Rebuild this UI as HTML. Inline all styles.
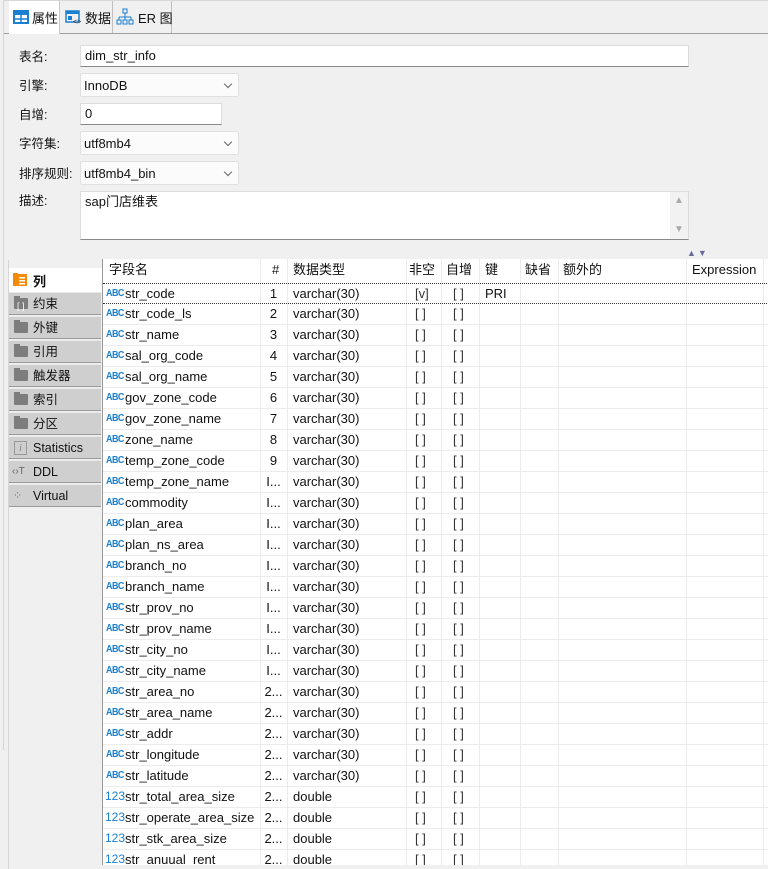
<!DOCTYPE html>
<html><head><meta charset="utf-8">
<style>
*{margin:0;padding:0;box-sizing:border-box}
body{width:768px;height:869px;overflow:hidden;background:#f0f0f0;font-family:"Liberation Sans","Noto Sans CJK SC",sans-serif;font-size:13px;color:#111;position:relative}
.a{position:absolute}
.lbl{position:absolute;left:19px;font-size:12.5px}
.inp{position:absolute;left:80px;background:#fff;border:1px solid #dcdcdc;border-bottom:1px solid #888;padding-left:4px;line-height:20px;font-size:13px}
.sel{position:absolute;left:80px;width:159px;height:24px;background:#fbfbfb;border:1px solid #e0e0e0;border-radius:2px;padding-left:3px;line-height:23px}
.sel:after{content:"";position:absolute;right:7px;top:7px;width:5px;height:5px;border-right:1px solid #666;border-bottom:1px solid #666;transform:rotate(45deg)}
.side{position:absolute;left:9px;width:92px;height:23px;background:#cfcfcf;border-top:1px solid #e8e8e8;border-bottom:1px solid #9a9a9a;padding-left:24px;line-height:22px;font-size:12.5px}
.fold{position:absolute;left:5px;top:5px;width:14px;height:11px;background:#7d7d7d;border-radius:1px}
.fold:before{content:"";position:absolute;left:0;top:-2px;width:6px;height:3px;background:#7d7d7d}
.tbl{position:absolute;left:102px;top:259px;width:666px;height:606px;background:#fff;border-left:1px solid #999;overflow:hidden}
.r{position:absolute;left:0;width:666px;height:21px;border-bottom:1px solid #ececec}
.r span{position:absolute;top:0;line-height:20px;white-space:nowrap}
.vl{position:absolute;top:0;width:1px;height:606px;background:#ececec}
.r span.ic{left:3px;top:5px;font-size:10px;font-weight:bold;color:#1a7fd0;letter-spacing:-0.6px;line-height:10px;transform:scaleX(0.9);transform-origin:left}
.r span.ic2{left:2px;top:1px;font-size:12px;color:#1a7fd0;line-height:16px}
.n{left:22px}.h{left:157px;width:27px;text-align:center}.t{left:190px}.nn{left:312px;color:#333}.ai{left:350px;color:#333}
</style></head><body>
<div class="a" style="left:3px;top:0;width:1px;height:750px;background:#d6d6d6"></div>
<div class="a" style="left:4px;top:0;width:764px;height:1px;background:#d8d8d8"></div>
<div class="a" style="left:4px;top:33px;width:764px;height:1px;background:#a0a0a0"></div>
<div class="a" style="left:9px;top:1px;width:51px;height:33px;background:#fff;border-right:1px solid #c8c8c8"></div>
<div class="a" style="left:112px;top:1px;width:1px;height:32px;background:#c0c0c0"></div>
<div class="a" style="left:171px;top:1px;width:1px;height:32px;background:#c0c0c0"></div>
<svg class="a" style="left:13px;top:10px" width="16" height="14"><rect x="1" y="1" width="14" height="12" fill="none" stroke="#1a7fd0" stroke-width="2"/><rect x="1" y="1" width="14" height="4" fill="#1a7fd0"/><line x1="8" y1="5" x2="8" y2="13" stroke="#1a7fd0" stroke-width="1.5"/><line x1="1" y1="9" x2="15" y2="9" stroke="#1a7fd0" stroke-width="1.5"/></svg>
<div class="a" style="left:32px;top:8px">属性</div>
<svg class="a" style="left:65px;top:10px" width="16" height="15"><rect x="1" y="1" width="13" height="11" fill="none" stroke="#1a7fd0" stroke-width="1.5"/><rect x="1" y="1" width="13" height="3" fill="#1a7fd0"/><rect x="3" y="6" width="4" height="4" fill="#1a7fd0"/><text x="8" y="14" font-size="7" fill="#333">&lt;&gt;</text></svg>
<div class="a" style="left:85px;top:8px">数据</div>
<svg class="a" style="left:116px;top:8px" width="18" height="18"><rect x="7" y="1" width="4" height="4" fill="none" stroke="#1a7fd0"/><path d="M9 5v4M3 9h12M3 9v3M9 9v3M15 9v3" stroke="#1a7fd0" fill="none"/><rect x="1" y="12" width="4" height="4" fill="none" stroke="#1a7fd0"/><rect x="7" y="12" width="4" height="4" fill="none" stroke="#1a7fd0"/><rect x="13" y="12" width="4" height="4" fill="none" stroke="#1a7fd0"/></svg>
<div class="a" style="left:138px;top:8px">ER 图</div>
<div class="lbl" style="top:46px">表名:</div>
<div class="inp" style="top:45px;width:609px;height:22px">dim_str_info</div>
<div class="lbl" style="top:75px">引擎:</div>
<div class="sel" style="top:73px">InnoDB</div>
<div class="lbl" style="top:104px">自增:</div>
<div class="inp" style="top:103px;width:142px;height:22px">0</div>
<div class="lbl" style="top:133px">字符集:</div>
<div class="sel" style="top:131px">utf8mb4</div>
<div class="lbl" style="top:163px">排序规则:</div>
<div class="sel" style="top:161px">utf8mb4_bin</div>
<div class="lbl" style="top:190px">描述:</div>
<div class="inp" style="top:191px;width:609px;height:49px;line-height:20px">sap门店维表</div>
<div class="a" style="left:670px;top:192px;width:18px;height:47px;background:#f2f2f2"></div>
<div class="a" style="left:674px;top:195px;font-size:10px;color:#aaa">▲</div>
<div class="a" style="left:674px;top:224px;font-size:10px;color:#aaa">▼</div>
<div class="a" style="left:687px;top:248px;font-size:9px;color:#6a6a9a;letter-spacing:2px">▲▼</div>
<div class="a" style="left:8px;top:260px;width:1px;height:609px;background:#d6d6d6"></div>
<div class="a" style="left:9px;top:268px;width:93px;height:24px;background:#fff"></div>
<svg class="a" style="left:13px;top:272px" width="14" height="14"><path d="M0 1h5v1h9v12H0z" fill="#f58a07"/><rect x="6" y="5" width="6" height="1.5" fill="#fff"/><rect x="6" y="8" width="6" height="1.5" fill="#fff"/><rect x="6" y="11" width="6" height="1.5" fill="#fff"/></svg>
<div class="a" style="left:33px;top:271px;font-weight:bold">列</div>
<div class="side" style="top:292px"><div class="fold"><span style="position:absolute;left:3px;top:-3px;color:#fff;font-size:9px">[ ]</span></div>约束</div>
<div class="side" style="top:316px"><div class="fold"></div>外键</div>
<div class="side" style="top:340px"><div class="fold"></div>引用</div>
<div class="side" style="top:364px"><div class="fold"></div>触发器</div>
<div class="side" style="top:388px"><div class="fold"></div>索引</div>
<div class="side" style="top:412px"><div class="fold"></div>分区</div>
<div class="side" style="top:436px"><div class="a" style="left:5px;top:4px;width:13px;height:14px;border:1px solid #999;font-style:italic;font-family:'Liberation Serif';font-size:11px;line-height:12px;text-align:center;color:#888">i</div>Statistics</div>
<div class="side" style="top:460px"><div class="a" style="left:3px;top:0;font-size:10px;color:#666">‹›T</div>DDL</div>
<div class="side" style="top:484px"><div class="a" style="left:4px;top:0;font-size:11px;color:#777">⁘</div>Virtual</div>
<div class="tbl">
<div class="r" style="top:0;height:23px;border-bottom:none"><span style="left:6px;top:1px">字段名</span><span style="left:169px;top:1px">#</span><span class="t" style="top:1px">数据类型</span><span style="left:306px;top:1px">非空</span><span style="left:343px;top:1px">自增</span><span style="left:382px;top:1px">键</span><span style="left:422px;top:1px">缺省</span><span style="left:460px;top:1px">额外的</span><span style="left:589px;top:1px">Expression</span></div>
<div class="vl" style="left:157px"></div><div class="vl" style="left:184px"></div><div class="vl" style="left:303px"></div><div class="vl" style="left:338px"></div><div class="vl" style="left:376px"></div><div class="vl" style="left:417px"></div><div class="vl" style="left:455px"></div><div class="vl" style="left:583px"></div><div class="vl" style="left:660px"></div>
<div class="r" style="top:24px;border-top:1px dotted #333;border-bottom:1px dotted #333"><span class="ic">ABC</span><span class="n">str_code</span><span class="h">1</span><span class="t">varchar(30)</span><span class="nn">[v]</span><span class="ai">[ ]</span><span style="left:382px">PRI</span></div>
<div class="r" style="top:45px"><span class="ic">ABC</span><span class="n">str_code_ls</span><span class="h">2</span><span class="t">varchar(30)</span><span class="nn">[ ]</span><span class="ai">[ ]</span></div>
<div class="r" style="top:66px"><span class="ic">ABC</span><span class="n">str_name</span><span class="h">3</span><span class="t">varchar(30)</span><span class="nn">[ ]</span><span class="ai">[ ]</span></div>
<div class="r" style="top:87px"><span class="ic">ABC</span><span class="n">sal_org_code</span><span class="h">4</span><span class="t">varchar(30)</span><span class="nn">[ ]</span><span class="ai">[ ]</span></div>
<div class="r" style="top:108px"><span class="ic">ABC</span><span class="n">sal_org_name</span><span class="h">5</span><span class="t">varchar(30)</span><span class="nn">[ ]</span><span class="ai">[ ]</span></div>
<div class="r" style="top:129px"><span class="ic">ABC</span><span class="n">gov_zone_code</span><span class="h">6</span><span class="t">varchar(30)</span><span class="nn">[ ]</span><span class="ai">[ ]</span></div>
<div class="r" style="top:150px"><span class="ic">ABC</span><span class="n">gov_zone_name</span><span class="h">7</span><span class="t">varchar(30)</span><span class="nn">[ ]</span><span class="ai">[ ]</span></div>
<div class="r" style="top:171px"><span class="ic">ABC</span><span class="n">zone_name</span><span class="h">8</span><span class="t">varchar(30)</span><span class="nn">[ ]</span><span class="ai">[ ]</span></div>
<div class="r" style="top:192px"><span class="ic">ABC</span><span class="n">temp_zone_code</span><span class="h">9</span><span class="t">varchar(30)</span><span class="nn">[ ]</span><span class="ai">[ ]</span></div>
<div class="r" style="top:213px"><span class="ic">ABC</span><span class="n">temp_zone_name</span><span class="h">I...</span><span class="t">varchar(30)</span><span class="nn">[ ]</span><span class="ai">[ ]</span></div>
<div class="r" style="top:234px"><span class="ic">ABC</span><span class="n">commodity</span><span class="h">I...</span><span class="t">varchar(30)</span><span class="nn">[ ]</span><span class="ai">[ ]</span></div>
<div class="r" style="top:255px"><span class="ic">ABC</span><span class="n">plan_area</span><span class="h">I...</span><span class="t">varchar(30)</span><span class="nn">[ ]</span><span class="ai">[ ]</span></div>
<div class="r" style="top:276px"><span class="ic">ABC</span><span class="n">plan_ns_area</span><span class="h">I...</span><span class="t">varchar(30)</span><span class="nn">[ ]</span><span class="ai">[ ]</span></div>
<div class="r" style="top:297px"><span class="ic">ABC</span><span class="n">branch_no</span><span class="h">I...</span><span class="t">varchar(30)</span><span class="nn">[ ]</span><span class="ai">[ ]</span></div>
<div class="r" style="top:318px"><span class="ic">ABC</span><span class="n">branch_name</span><span class="h">I...</span><span class="t">varchar(30)</span><span class="nn">[ ]</span><span class="ai">[ ]</span></div>
<div class="r" style="top:339px"><span class="ic">ABC</span><span class="n">str_prov_no</span><span class="h">I...</span><span class="t">varchar(30)</span><span class="nn">[ ]</span><span class="ai">[ ]</span></div>
<div class="r" style="top:360px"><span class="ic">ABC</span><span class="n">str_prov_name</span><span class="h">I...</span><span class="t">varchar(30)</span><span class="nn">[ ]</span><span class="ai">[ ]</span></div>
<div class="r" style="top:381px"><span class="ic">ABC</span><span class="n">str_city_no</span><span class="h">I...</span><span class="t">varchar(30)</span><span class="nn">[ ]</span><span class="ai">[ ]</span></div>
<div class="r" style="top:402px"><span class="ic">ABC</span><span class="n">str_city_name</span><span class="h">I...</span><span class="t">varchar(30)</span><span class="nn">[ ]</span><span class="ai">[ ]</span></div>
<div class="r" style="top:423px"><span class="ic">ABC</span><span class="n">str_area_no</span><span class="h">2...</span><span class="t">varchar(30)</span><span class="nn">[ ]</span><span class="ai">[ ]</span></div>
<div class="r" style="top:444px"><span class="ic">ABC</span><span class="n">str_area_name</span><span class="h">2...</span><span class="t">varchar(30)</span><span class="nn">[ ]</span><span class="ai">[ ]</span></div>
<div class="r" style="top:465px"><span class="ic">ABC</span><span class="n">str_addr</span><span class="h">2...</span><span class="t">varchar(30)</span><span class="nn">[ ]</span><span class="ai">[ ]</span></div>
<div class="r" style="top:486px"><span class="ic">ABC</span><span class="n">str_longitude</span><span class="h">2...</span><span class="t">varchar(30)</span><span class="nn">[ ]</span><span class="ai">[ ]</span></div>
<div class="r" style="top:507px"><span class="ic">ABC</span><span class="n">str_latitude</span><span class="h">2...</span><span class="t">varchar(30)</span><span class="nn">[ ]</span><span class="ai">[ ]</span></div>
<div class="r" style="top:528px"><span class="ic2">123</span><span class="n">str_total_area_size</span><span class="h">2...</span><span class="t">double</span><span class="nn">[ ]</span><span class="ai">[ ]</span></div>
<div class="r" style="top:549px"><span class="ic2">123</span><span class="n">str_operate_area_size</span><span class="h">2...</span><span class="t">double</span><span class="nn">[ ]</span><span class="ai">[ ]</span></div>
<div class="r" style="top:570px"><span class="ic2">123</span><span class="n">str_stk_area_size</span><span class="h">2...</span><span class="t">double</span><span class="nn">[ ]</span><span class="ai">[ ]</span></div>
<div class="r" style="top:591px"><span class="ic2">123</span><span class="n">str_anuual_rent</span><span class="h">2...</span><span class="t">double</span><span class="nn">[ ]</span><span class="ai">[ ]</span></div>
</div>
</body></html>
